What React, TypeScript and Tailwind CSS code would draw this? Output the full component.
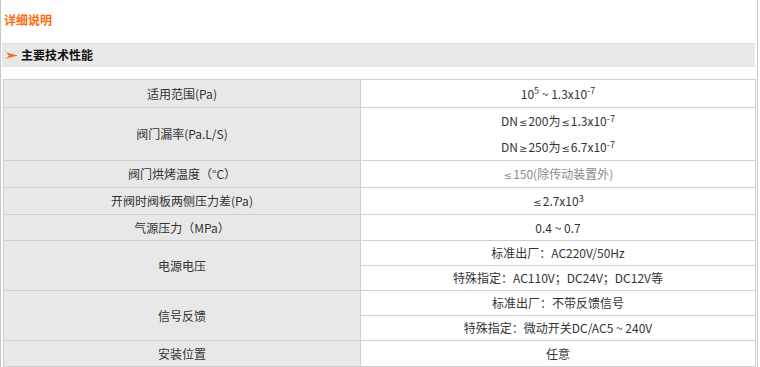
import type React from "react"

type Row = {
  label: string
  values: React.ReactNode[]
  h: string
  split?: boolean
  muted?: boolean
}

const sup = "text-[9px] leading-none"

// narrow comparison sign, as the reference renders it
function Cmp({ c }: { c: string }) {
  return <span className="font-['DejaVu_Sans'] text-[10px] leading-none mx-[1px]">{c}</span>
}

const rows: Row[] = [
  {
    label: "适用范围(Pa)",
    h: "h-[28px]",
    values: [
      <>
        10<sup className={sup}>5</sup> ~ 1.3x10<sup className={sup}>-7</sup>
      </>,
    ],
  },
  {
    label: "阀门漏率(Pa.L/S)",
    h: "h-[53px]",
    values: [
      <>
        DN<Cmp c="≤" />200为<Cmp c="≤" />1.3x10<sup className={sup}>-7</sup>
      </>,
      <>
        DN<Cmp c="≥" />250为<Cmp c="≤" />6.7x10<sup className={sup}>-7</sup>
      </>,
    ],
  },
  {
    label: "阀门烘烤温度（°C）",
    h: "h-[27px]",
    values: [
      <>
        <Cmp c="≤" />150(除传动装置外)
      </>,
    ],
    muted: true,
  },
  {
    label: "开阀时阀板两侧压力差(Pa)",
    h: "h-[27px]",
    values: [
      <>
        <Cmp c="≤" />2.7x10<sup className={sup}>3</sup>
      </>,
    ],
  },
  { label: "气源压力（MPa）", h: "h-[26px]", values: ["0.4 ~ 0.7"] },
  {
    label: "电源电压",
    h: "h-[25px]",
    values: ["标准出厂：AC220V/50Hz", "特殊指定：AC110V；DC24V；DC12V等"],
    split: true,
  },
  {
    label: "信号反馈",
    h: "h-[25px]",
    values: ["标准出厂：不带反馈信号", "特殊指定：微动开关DC/AC5 ~ 240V"],
    split: true,
  },
  { label: "安装位置", h: "h-[26px]", values: ["任意"] },
]

const cell = "border border-[#cfcfcf] text-center align-middle p-0"

export default function App() {
  return (
    <div
      className="w-[758px] h-[367px] overflow-hidden bg-white border-x border-[#c8c8c8] text-[12px] leading-[14px] text-[#333]"
      style={{ fontFamily: '"Microsoft YaHei", "Noto Sans CJK SC", "Noto Sans", sans-serif' }}
    >
      <div className="h-[43px] pl-[3px] pt-[12px] font-bold text-[#ff6a0e] leading-[16px]">详细说明</div>

      {/* section bar */}
      <div className="ml-[1px] mr-[2px] h-[24px] bg-[#e8e8e8] border-y border-[#e0e0e0] flex items-center gap-[3px] pl-[4px] font-bold text-[#111]">
        <svg width="12" height="7" viewBox="0 0 12 7">
          <polygon points="0,0.5 12,3.5 0,6.5 3,3.5" fill="#f36c17" />
        </svg>
        <span>主要技术性能</span>
      </div>

      <div className="h-[12px]" />

      <table className="ml-[2px] w-[753px] border-collapse border border-[#c8c8c8] table-fixed">
        <colgroup>
          <col className="w-[357px]" />
          <col />
        </colgroup>
        <tbody>
          {rows.map((r) =>
            r.split ? (
              r.values.map((v, i) => (
                <tr key={r.label + i} className={r.h}>
                  {i === 0 && (
                    <td rowSpan={r.values.length} className={`${cell} bg-[#e8e8e8]`}>
                      {r.label}
                    </td>
                  )}
                  <td className={cell}>{v}</td>
                </tr>
              ))
            ) : (
              <tr key={r.label} className={r.h}>
                <td className={`${cell} bg-[#e8e8e8]`}>{r.label}</td>
                <td className={`${cell} ${r.muted ? "text-[#8a8a8a]" : ""}`}>
                  {r.values.map((v, i) => (
                    <div key={i} className={r.values.length > 1 ? "h-[26px] leading-[26px]" : "h-[14px]"}>
                      {v}
                    </div>
                  ))}
                </td>
              </tr>
            ),
          )}
        </tbody>
      </table>
    </div>
  )
}
